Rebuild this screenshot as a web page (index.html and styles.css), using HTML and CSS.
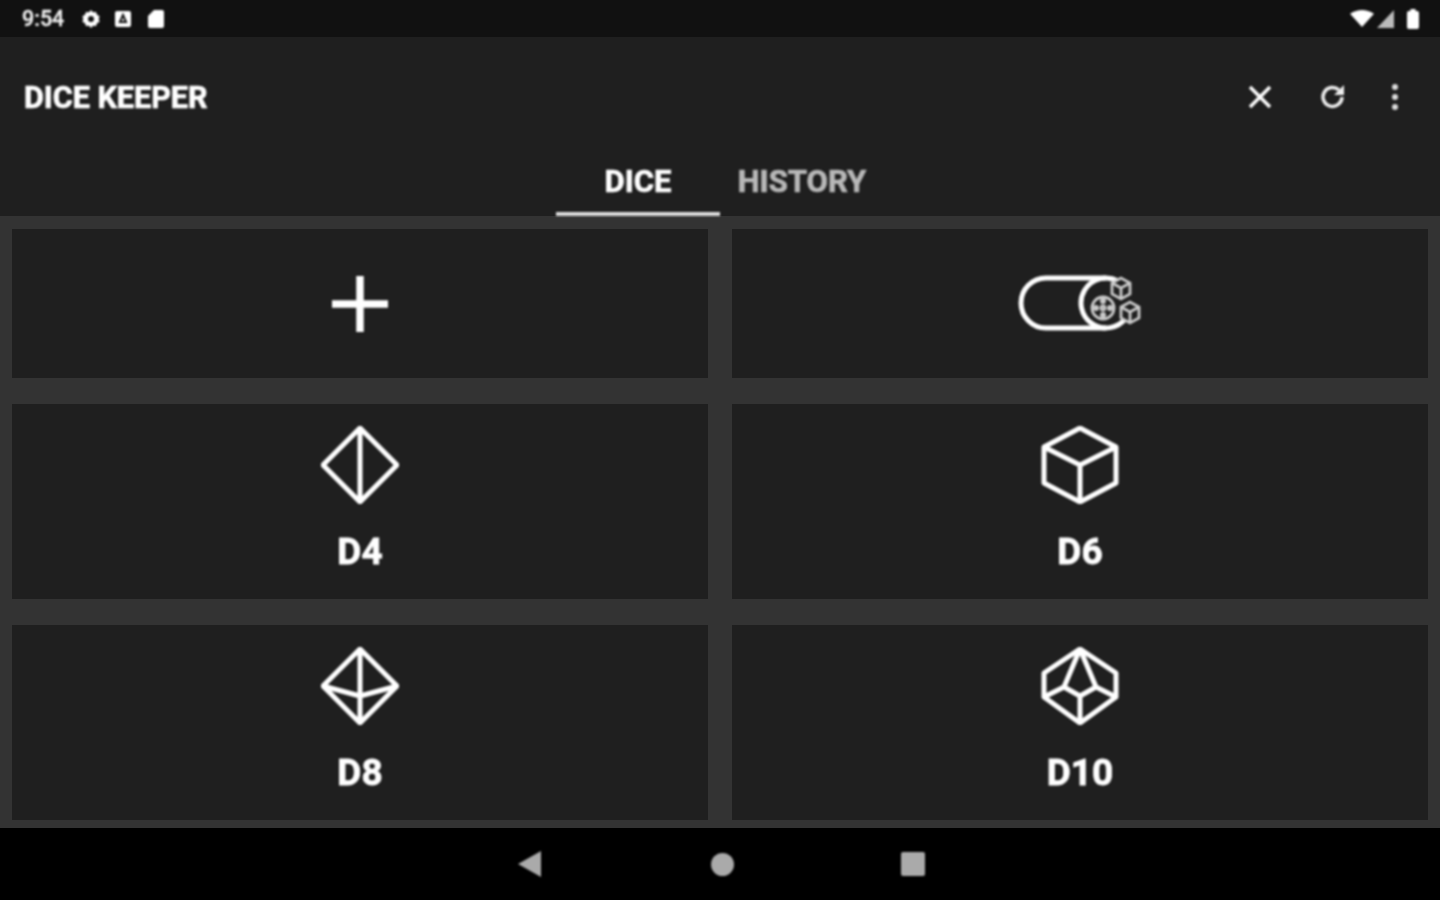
FILE: index.html
```html
<!DOCTYPE html>
<html lang="en">
<head>
  <meta charset="UTF-8" />
  <title>Dice Keeper</title>
  <link rel="stylesheet" href="styles.css">
</head>
<body>

  <div class="status-bar">
    <div class="status-left">
      <span class="time">9:54</span>
      <svg width="20" height="20" viewBox="0 0 20 20"><path d="M10 1l2 2.200 3-.3 1 2.900 2.600 1.500L17.700 10l.9 2.700-2.600 1.500-1 2.900-3-.3-2 2.200-2-2.200-3 .3-1-2.900-2.600-1.500.9-2.700-.9-2.700L4 5.800l1-2.900 3 .3z" fill="#fff"/><circle cx="10" cy="10" r="3" fill="#111"/></svg>
      <svg width="18" height="18" viewBox="0 0 18 18"><rect x="1" y="1" width="16" height="16" rx="2" fill="#fff"/><path d="M6 12l3-7 3 7z" fill="none" stroke="#111" stroke-width="2"/></svg>
      <svg class="sd" width="18" height="20" viewBox="0 0 18 20"><path d="M7 1h8a2 2 0 0 1 2 2v14a2 2 0 0 1-2 2H3a2 2 0 0 1-2-2V7z" fill="#fff"/></svg>
    </div>
    <div class="status-right">
      <svg width="24" height="17" viewBox="0 0 26 18" preserveAspectRatio="none"><path d="M0 4Q13-4 26 4L13 18z" fill="#fff"/></svg>
      <svg width="18" height="18" viewBox="0 0 18 18"><path d="M17 0v18H0z" fill="#bbb"/></svg>
      <svg class="battery" width="12" height="20" viewBox="0 0 14 20" preserveAspectRatio="none"><path d="M4 2V0h6v2h2a2 2 0 0 1 2 2v14a2 2 0 0 1-2 2H2a2 2 0 0 1-2-2V4a2 2 0 0 1 2-2z" fill="#fff"/></svg>
    </div>
  </div>

  <header class="app-bar">
    <div class="toolbar">
      <h1>DICE KEEPER</h1>
      <div class="actions">
        <svg class="act-close" width="24" height="24" viewBox="0 0 24 24"><path d="M2 2l20 20M22 2L2 22" stroke="#fff" stroke-width="3.500" fill="none"/></svg>
        <svg class="act-reload" width="28" height="28" viewBox="0 0 28 28"><path d="M23 14a9.500 9.500 0 1 1-3-7" stroke="#eee" stroke-width="3.500" fill="none"/><path d="M25 2v10H15z" fill="#eee"/></svg>
        <svg width="6" height="26" viewBox="0 0 6 26"><circle cx="3" cy="3" r="3" fill="#ddd"/><circle cx="3" cy="13" r="3" fill="#ddd"/><circle cx="3" cy="23" r="3" fill="#ddd"/></svg>
      </div>
    </div>
    <nav class="tabs">
      <div class="tab active">DICE</div>
      <div class="tab">HISTORY</div>
    </nav>
  </header>

  <main class="grid">
    <div class="card">
      <svg width="56" height="56" viewBox="0 0 56 56"><path d="M28 0v56M0 28h56" stroke="#fff" stroke-width="7.500" fill="none"/></svg>
    </div>
    <div class="card">
      <svg width="124" height="60" viewBox="0 0 124 60" fill="none" stroke="#fff">
        <path d="M88 4H28a25 25 0 0 0 0 50h60" stroke-width="5"/>
        <path d="M100 7A25 25 0 1 0 108 44" stroke-width="5"/>
        <g stroke-width="2.800" stroke="#ccc" fill="#1f1f1f">
          <circle cx="85" cy="34" r="11"/>
          <circle cx="85" cy="34" r="2"/>
          <circle cx="85" cy="27" r="1.600"/><circle cx="92" cy="34" r="1.600"/><circle cx="85" cy="41" r="1.600"/><circle cx="78" cy="34" r="1.600"/>
          <path d="M94 9l9-5 9 5v11l-9 5-9-5zM94 9l9 5 9-5M103 14v11"/>
          <path d="M103 33l9-5 9 5v11l-9 5-9-5zM103 33l9 5 9-5M112 38v11"/>
        </g>
      </svg>
    </div>
    <div class="card die-card">
      <svg class="die" width="78" height="78" viewBox="0 0 78 78"><path d="M39 2l37 37-37 37L2 39zM39 2v74"/></svg>
      <span class="label">D4</span>
    </div>
    <div class="card die-card">
      <svg class="die" width="78" height="78" viewBox="0 0 78 78"><path d="M39 2l36 19v36L39 76 3 57V21zM3 21l36 18 36-18M39 39v37"/></svg>
      <span class="label">D6</span>
    </div>
    <div class="card die-card">
      <svg class="die" width="78" height="78" viewBox="0 0 78 78"><path d="M39 2l37 37-37 37L2 39zM39 2v74M2 39l37 10 37-10"/></svg>
      <span class="label">D8</span>
    </div>
    <div class="card die-card">
      <svg class="die" width="78" height="78" viewBox="0 0 78 78"><path d="M39 2l36 24v24L39 76 3 50V26zM39 2L23 40l16 9 16-9zM3 50l20-10M75 50L55 40M39 49v27"/></svg>
      <span class="label">D10</span>
    </div>
  </main>

  <footer class="nav-bar">
    <svg width="24" height="26" viewBox="0 0 24 26"><path d="M23 0v26L0 13z" fill="#aaa"/></svg>
    <div class="nav-home"></div>
    <div class="nav-recent"></div>
  </footer>

</body>
</html>
```

FILE: styles.css
```css
html, body {
  height: 100%;
}

body {
  margin: 0;
  background-color: #000;
  color: #fff;
  font-family: Roboto, sans-serif;
  display: flex;
  flex-direction: column;
  overflow: hidden;
}

/* the source shot is a soft upscale */
svg, h1, .tab, .label, .time, .nav-home, .nav-recent {
  filter: blur(0.8px);
}

.status-bar {
  height: 37px;
  background-color: #111;
  display: flex;
  justify-content: space-between;
  align-items: center;
  padding: 0 21px 0 22px;
}

.status-left {
  display: flex;
  align-items: center;
  gap: 13px;
}

.status-right {
  display: flex;
  align-items: center;
  gap: 3px;
}

.battery {
  margin-left: 9px;
}

.sd {
  margin-left: 2px;
}

.time {
  font-size: 21.5px;
  font-weight: 500;
  color: #eee;
  margin-right: 4px;
  -webkit-text-stroke: 0.4px;
}

.app-bar {
  height: 179px;
  background-color: #1f1f1f;
  display: flex;
  flex-direction: column;
}

.toolbar {
  height: 120px;
  display: flex;
  justify-content: space-between;
  align-items: center;
  padding: 1px 42px 0 24px;
  box-sizing: border-box;
}

h1 {
  margin: 0;
  font-size: 30.5px;
  font-weight: 700;
  -webkit-text-stroke: 0.7px #fff;
}

.actions {
  display: flex;
  align-items: center;
  gap: 44px;
  margin-top: -1px;
}

.act-close {
  margin-right: 3px;
}

.act-reload {
  margin-right: 1px;
}

.tabs {
  flex: 1;
  display: flex;
  justify-content: center;
}

.tab {
  width: 164px;
  text-align: center;
  font-size: 31px;
  font-weight: 700;
  line-height: 50px;
  color: #b8b8b8;
  box-sizing: border-box;
  -webkit-text-stroke: 0.7px;
}

.tab.active {
  color: #fff;
  border-bottom: 4px solid #ddd;
}

.grid {
  height: 612px;
  box-sizing: border-box;
  background-color: #333;
  padding: 13px 12px 8px;
  display: grid;
  grid-template-columns: 1fr 1fr;
  grid-template-rows: 149px 195px 195px;
  gap: 26px 24px;
}

.card {
  background-color: #1f1f1f;
  display: flex;
  flex-direction: column;
  align-items: center;
  justify-content: center;
}

.die-card {
  gap: 26px;
  padding-bottom: 3px;
}

.die {
  fill: none;
  stroke: #fff;
  stroke-width: 5;
  stroke-linejoin: round;
}

.label {
  font-size: 37px;
  font-weight: 700;
  line-height: 44px;
  -webkit-text-stroke: 0.8px #fff;
}

.nav-bar {
  flex: 1;
  display: flex;
  align-items: center;
  justify-content: center;
  gap: 169px;
  padding-left: 2px;
}

.nav-home {
  width: 23px;
  height: 23px;
  border-radius: 50%;
  background-color: #aaa;
}

.nav-recent {
  width: 24px;
  height: 24px;
  border-radius: 2px;
  background-color: #aaa;
  margin-left: -2px;
}
```
